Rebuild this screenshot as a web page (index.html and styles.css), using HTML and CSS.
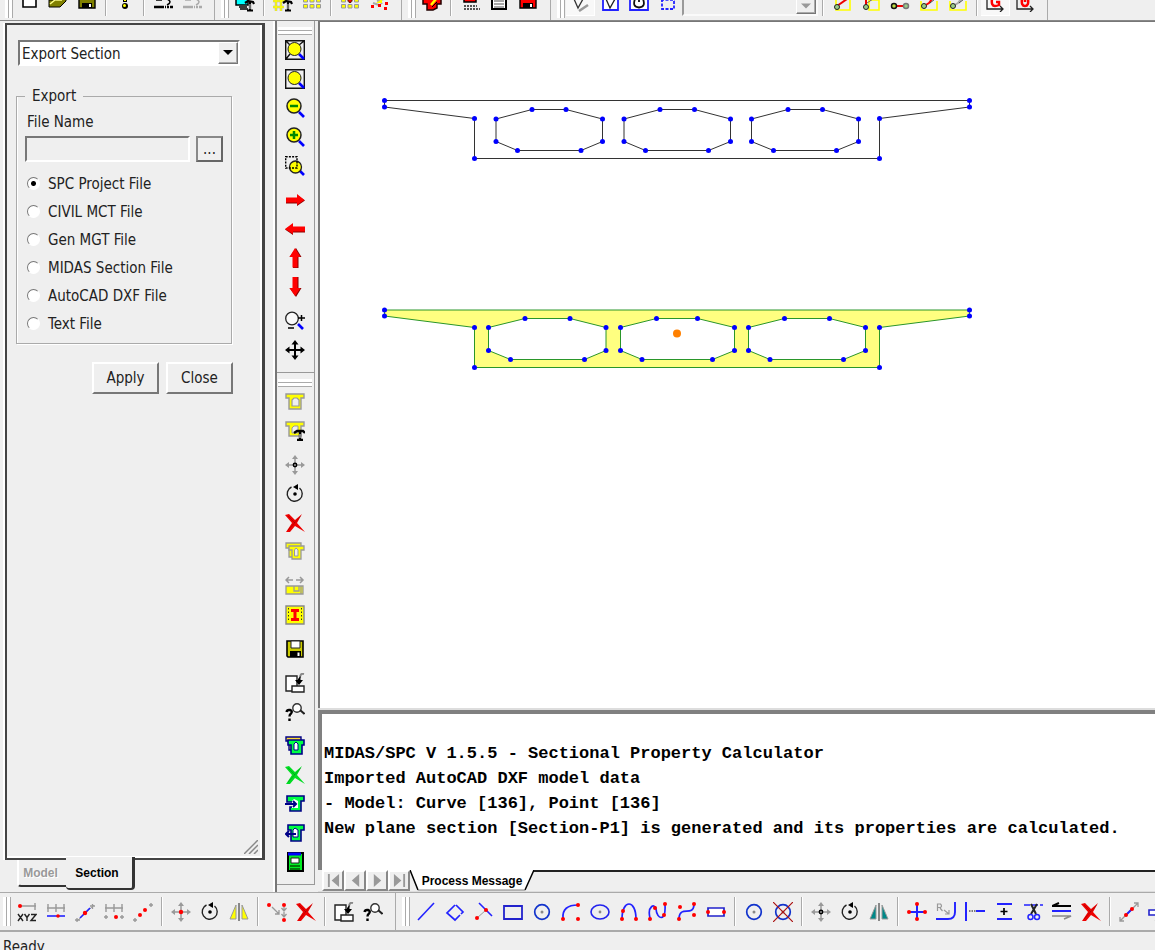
FILE: index.html
```html
<!DOCTYPE html>
<html lang="en">
<head>
<meta charset="utf-8">
<title>MIDAS/SPC - Sectional Property Calculator</title>
<link rel="stylesheet" href="styles.css">
</head>
<body>
<svg class="sprite" aria-hidden="true">
  <defs>
    <marker id="node" markerUnits="userSpaceOnUse" markerWidth="6" markerHeight="6" refX="3" refY="3"><circle cx="3" cy="3" r="2.5" fill="#00f"/></marker>
  </defs>
  <!-- main bar icons, 20 x 12 -->
  <symbol id="new" viewBox="0 0 20 12"><path d="M4-1V7H17V-1" fill="#fff" stroke="#000" stroke-width="1.6"/></symbol>
  <symbol id="open" viewBox="0 0 20 12"><path d="M1 7V0H7L18-2V1L12 7Z" fill="#808000" stroke="#000"/><path d="M2 4L7 0H14" fill="none" stroke="#ff8" stroke-width="1.500"/></symbol>
  <symbol id="save-cut" viewBox="0 0 20 12"><path d="M2-1V8H18V-1Z" fill="#808000" stroke="#000" stroke-width="1.4"/><path d="M5 3H15V8H5Z"/><path d="M12 4H14V7H12Z" fill="#fff"/></symbol>
  <symbol id="bang" viewBox="0 0 20 12"><path d="M10-2V2" stroke="#000" stroke-width="4"/><path d="M10-2V1" stroke="#ff0" stroke-width="2"/><circle cx="10" cy="6" r="3"/><circle cx="9.500" cy="5.500" r="1.500" fill="#ff0"/></symbol>
  <symbol id="undo" viewBox="0 0 20 12"><path d="M3 0H9M14-1Q20 2 14 5" fill="none" stroke="currentColor" stroke-width="1.500"/><path d="M1 7H11M12 7H20" stroke="currentColor" stroke-width="2.500"/><path d="M13.500 5V9M16.500 5V9" stroke="#efefef"/></symbol>
  <symbol id="monitor" viewBox="0 0 20 12"><path d="M1-1V5H13V-1Z" fill="#0ff" stroke="#000" stroke-width="1.500"/><path d="M4 7H12M5 9H13" stroke="#000" stroke-width="1.500"/><path d="M10 3L13 1L18 2L19 4M15 2V10M12 10.500H18" fill="none" stroke="#000" stroke-width="2.200"/><path d="M15 4V9" stroke="#ddd"/></symbol>
  <symbol id="hash" viewBox="0 0 20 12"><path d="M3-1V11M8-1V11M0 1H14M0 7H11" fill="none" stroke="#aaa" stroke-width="2.500"/><path d="M3-1V11M8-1V11M0 1H14M0 7H11" fill="none" stroke="#ff0" stroke-width="1.500"/><path d="M10 3L13 1L18 2L19 4M15 2V10M12 10.500H18" fill="none" stroke="#000" stroke-width="2.200"/><path d="M15 4V9" stroke="#ddd"/></symbol>
  <symbol id="grid" viewBox="0 0 20 12"><g fill="#ff0" stroke="#999"><path d="M1.500-1H5.500V2H1.500ZM8-1H12V2H8ZM14.500-1H18.500V2H14.500ZM1.500 4.500H5.500V8H1.500ZM8 4.500H12V8H8ZM14.500 4.500H18.500V8H14.500Z"/></g></symbol>
  <symbol id="grid-red" viewBox="0 0 20 12"><use href="#grid" width="20" height="12"/><path d="M7-1H13L10 3Z" fill="#f00" stroke="#600"/></symbol>
  <symbol id="scatter" viewBox="0 0 20 12"><path d="M4 3L10 5M9-2L13 4M8 1L15-1" stroke="#aaa" stroke-width="2"/><path d="M7 3L13-1V3Z" fill="#ff0"/><path d="M2 5H5V8H2ZM9 4H12V7H9ZM16 2H19V5H16ZM15 7H18V10H15Z" fill="#f00"/></symbol>
  <symbol id="run" viewBox="0 0 20 12"><path d="M1-1H19V4H15V8L11 10H5V4H1Z" fill="#f00" stroke="#200" stroke-width="1.500"/><path d="M9 5L14-1" stroke="#ff0" stroke-width="2.500"/><path d="M10 7L15 2" stroke="#000"/></symbol>
  <symbol id="list-red" viewBox="0 0 20 12"><path d="M4-1H16V2H4Z" fill="#f00" stroke="#000" stroke-width="1.500"/><path d="M4 6H17M4 9H20" stroke="#222" stroke-width="1.500" stroke-dasharray="2 1"/></symbol>
  <symbol id="sheet" viewBox="0 0 20 12"><path d="M3-1V9H17V-1Z" fill="#fff" stroke="#000" stroke-width="2"/><path d="M5 1H15M5 4H15M5 7H15" stroke="#555" stroke-width="1.200"/><path d="M5-1H15" stroke="#ff0" stroke-width="2"/></symbol>
  <symbol id="disk-red" viewBox="0 0 20 12"><path d="M2-1V8H18V-1Z" fill="#f00" stroke="#000" stroke-width="1.400"/><path d="M5 3H15V8H5Z"/><path d="M12 4H14V7H12Z" fill="#fff"/><path d="M5-1H15V0H5Z" fill="#ff0"/></symbol>
  <symbol id="vee" viewBox="0 0 20 12"><path d="M4-1L8 8L13-1" fill="none" stroke="#333" stroke-width="1.300"/><path d="M9 11L18 5" stroke="#999" stroke-width="2.500"/></symbol>
  <symbol id="vee-box" viewBox="0 0 20 12"><path d="M3-1V10H18V-1" fill="#fff" stroke="#22f" stroke-width="1.800"/><path d="M6-1L10 8L15-1" fill="none" stroke="#222" stroke-width="1.300"/></symbol>
  <symbol id="hand-box" viewBox="0 0 20 12"><path d="M1-1V10H19V-1" fill="#fff" stroke="#22f" stroke-width="1.800"/><path d="M6-1Q3 7 10 7.500Q17 7 14-1M10-1V2" fill="none" stroke="#111" stroke-width="1.800"/></symbol>
  <symbol id="select-box" viewBox="0 0 20 12"><path d="M4-1V9H16V-1" fill="none" stroke="#22f" stroke-width="1.800" stroke-dasharray="3 1.500"/><path d="M3 0H17" stroke="#22f" stroke-width="1.500" stroke-dasharray="3 1.500"/></symbol>
  <symbol id="snap-a" viewBox="0 0 20 12"><path d="M4-1V10H18V-1" fill="none" stroke="#ff0" stroke-width="1.600"/><path d="M5 6L15-1" stroke="#e00" stroke-width="2"/><circle cx="5" cy="7" r="2.500" fill="#9c8" stroke="#222"/></symbol>
  <symbol id="snap-b" viewBox="0 0 20 12"><path d="M8 10H18V0H8Z" fill="none" stroke="#ff0" stroke-width="1.600"/><path d="M5 6V-1" stroke="#e00" stroke-width="2"/><circle cx="5" cy="7" r="2.500" fill="#9c8" stroke="#222"/><path d="M6 3L12-1" stroke="#666"/></symbol>
  <symbol id="snap-c" viewBox="0 0 20 12"><path d="M4 6H16" stroke="#e00" stroke-width="2"/><circle cx="4" cy="6" r="2.500" fill="#bd4" stroke="#111" stroke-width="1.500"/><circle cx="16" cy="6" r="2.500" fill="#9c8" stroke="#777" stroke-width="1.500"/></symbol>
  <symbol id="snap-d" viewBox="0 0 20 12"><path d="M2 1V10H18V1" fill="none" stroke="#ff0" stroke-width="1.600"/><path d="M5 6L10 3L13-1" fill="none" stroke="currentColor" stroke-width="2"/><path d="M11 3L16-1" stroke="#444"/><circle cx="5" cy="6" r="2.500" fill="#9c8" stroke="#222"/></symbol>
  <symbol id="axis-g" viewBox="0 0 20 12"><path d="M2-1V9H18M15 6L18 9L15 12" fill="none" stroke="#222" stroke-width="1.300"/><path d="M7-1Q6 6 10 6Q12 6 14 5V2H11" fill="none" stroke="#f00" stroke-width="2.500"/></symbol>
  <symbol id="axis-u" viewBox="0 0 20 12"><path d="M2-1V9H18M15 6L18 9L15 12" fill="none" stroke="#222" stroke-width="1.300"/><path d="M7-1Q6 6 10 6Q14 6 13-1M10-1V2" fill="none" stroke="#f00" stroke-width="2.500"/></symbol>
  <!-- view bar icons, 20 x 20 -->
  <symbol id="lens" viewBox="0 0 20 20"><path d="M14 14L19 19" stroke="#00f" stroke-width="2.600"/><circle cx="9" cy="8" r="7" fill="#ff0" stroke="#222" stroke-width="1.500"/></symbol>
  <symbol id="fit" viewBox="0 0 20 20"><path d="M.7.7H19.300V19.300H.7ZM1 1L5 5M19 1L14 5M1 19L5 14" fill="none" stroke="#111" stroke-width="1.400"/><path d="M14 14L19 19" stroke="#00f" stroke-width="2.600"/><circle cx="9.500" cy="9" r="6.500" fill="#ff0" stroke="#222"/></symbol>
  <symbol id="window" viewBox="0 0 20 20"><path d="M.7.7H19.300V19.300H.7Z" fill="none" stroke="#111" stroke-width="1.400"/><path d="M14 14L19 19" stroke="#00f" stroke-width="2.600"/><circle cx="9.500" cy="9" r="6.500" fill="#ff0" stroke="#222"/></symbol>
  <symbol id="zoom-out" viewBox="0 0 20 20"><use href="#lens" width="20" height="20"/><path d="M5 8H13" stroke="#080" stroke-width="2.500"/></symbol>
  <symbol id="zoom-in" viewBox="0 0 20 20"><use href="#lens" width="20" height="20"/><path d="M5 8H13M9 4V12" stroke="#080" stroke-width="2.500"/></symbol>
  <symbol id="zoom-area" viewBox="0 0 20 20"><path d="M14 14L19 19" stroke="#00f" stroke-width="2.600"/><circle cx="10.500" cy="11" r="6" fill="#ff0" stroke="#222" stroke-width="1.300"/><path d="M.7.7H12V12H.7Z" fill="none" stroke="#000" stroke-width="1.400" stroke-dasharray="2 1.200"/></symbol>
  <symbol id="right" viewBox="0 0 20 20"><path d="M1 8.500H12V5L20 10.500L12 16V13.500H1Z" fill="#800"/><path d="M1 7.500H12V4L19.500 10L12 15V12.500H1Z" fill="#f00"/></symbol>
  <symbol id="left" viewBox="0 0 20 20"><path d="M20 8.500H8V5L0 10.500L8 16V13.500H20Z" fill="#800"/><path d="M20 7.500H8V4L0 10L8 15V12.500H20Z" fill="#f00"/></symbol>
  <symbol id="up" viewBox="0 0 20 20"><path d="M8 20V9H4.500L11 0L16.500 9H13.500V20Z" fill="#800"/><path d="M7.500 19.500V9H4.500L10 0L15.500 9H12.500V19.500Z" fill="#f00"/></symbol>
  <symbol id="down" viewBox="0 0 20 20"><path d="M8 0V11H4.500L11 20L16.500 11H13.500V0Z" fill="#800"/><path d="M7.500 0V11H4.500L10 19L15.500 11H12.500V0Z" fill="#f00"/></symbol>
  <symbol id="zoom-live" viewBox="0 0 20 20"><path d="M13 13L18 18" stroke="#00f" stroke-width="2.600"/><circle cx="7" cy="7.500" r="6.300" fill="#fafafa" stroke="#222" stroke-width="1.300"/><path d="M13 7H20M16.500 4V10M3 17H9" stroke="#000" stroke-width="1.500"/></symbol>
  <symbol id="pan" viewBox="0 0 20 20"><path d="M10 2V18M2 10H18" stroke="#000" stroke-width="2"/><path d="M10 0L13.500 4.500H6.500ZM10 20L13.500 15.500H6.500ZM0 10L4.500 6.500V13.500ZM20 10L15.500 6.500V13.500Z"/></symbol>
  <symbol id="section" viewBox="0 0 20 20"><path d="M1 2H19V6H16V17H4V6H1Z" fill="#ff0" stroke="#999" stroke-width="1.400"/><path d="M7 14V8L9 6H12L14 8V14Z" fill="#efefef" stroke="#999" stroke-width="1.200"/></symbol>
  <symbol id="section-tool" viewBox="0 0 20 20"><path d="M1 1H19V5H16V15H4V5H1Z" fill="#ff0" stroke="#999" stroke-width="1.400"/><path d="M7 12V7L9 5H13V12Z" fill="#efefef" stroke="#999"/><path d="M9 12L12 10L18 10L20 12M15 11V18M12 19H18" fill="none" stroke="#000" stroke-width="2.400"/><path d="M15 13V17" stroke="#fff"/></symbol>
  <symbol id="move" viewBox="0 0 20 20"><path d="M10 2V18M2 10H18" stroke="#999" stroke-width="1.500"/><path d="M10 0L13 4H7ZM10 20L13 16H7ZM0 10L4 7V13ZM20 10L16 7V13Z" fill="#999"/><circle cx="10" cy="10" r="2.400" fill="currentColor"/><circle cx="10" cy="10" r=".8" fill="#fff"/></symbol>
  <symbol id="move-red" viewBox="0 0 20 20"><path d="M10 2V18M2 10H18" stroke="#999" stroke-width="1.500"/><path d="M10 0L13 4H7ZM10 20L13 16H7ZM0 10L4 7V13ZM20 10L16 7V13Z" fill="#999"/><circle cx="10" cy="10" r="2.200" fill="#f00"/></symbol>
  <symbol id="rotate" viewBox="0 0 20 20"><path d="M6.500 3A7.500 7.500 0 1 0 14.500 4" fill="none" stroke="#222" stroke-width="1.400"/><path d="M8 3L13 0V6Z"/><circle cx="10" cy="10" r="1.800"/></symbol>
  <symbol id="cross" viewBox="0 0 20 20"><path d="M0 2L4 1L10 7L17 1L12 10L20 19L10 13L5 19H1L7 10Z" fill="currentColor"/><path d="M3 3L10 10M3 17L16 3" stroke="#0003"/></symbol>
  <symbol id="section-copy" viewBox="0 0 20 20"><path d="M1 1H16V5H14V15H4V6H1Z" fill="#ff0" stroke="#999" stroke-width="1.300"/><path d="M4 4H19V8H16V17H7V8H4Z" fill="#ff0" stroke="#999" stroke-width="1.300"/><path d="M9.500 14V8L11 6L13 8V14Z" fill="#efefef" stroke="#999"/></symbol>
  <symbol id="stretch" viewBox="0 0 20 20"><path d="M1 4H8M11 4H18M4 1L1 4L4 7M15 1L18 4L15 7" fill="none" stroke="#999" stroke-width="1.500"/><path d="M1 10H18V18H1Z" fill="#ff0" stroke="#999" stroke-width="1.300"/><path d="M9 10V15H14V10M16 10V18" fill="none" stroke="#999" stroke-width="1.300"/></symbol>
  <symbol id="i-beam" viewBox="0 0 20 20"><path d="M1 1H19V19H1Z" fill="#ff0" stroke="#888" stroke-width="1.400"/><path d="M6 5.500H14M6 14.500H14M10 6V14" stroke="#f00" stroke-width="3"/><path d="M3.500 3V17M16.500 3V17" stroke="#333" stroke-dasharray="1.500 2"/></symbol>
  <symbol id="floppy" viewBox="0 0 20 20"><path d="M2 2H18V18H3L2 17Z" fill="#cc0" stroke="#000" stroke-width="1.600"/><path d="M6 2H15V9H6Z" fill="#fff" stroke="#222"/><path d="M5 12H16V18H5Z"/><path d="M12.500 13.500H14.500V17H12.500Z" fill="#fff"/></symbol>
  <symbol id="import" viewBox="0 0 20 20"><path d="M1 3H12V18H1Z" fill="#fff" stroke="#222" stroke-width="1.400"/><path d="M7 13H19V19H7Z" fill="#fff" stroke="#222" stroke-width="1.400"/><path d="M19 1Q15 0 15 5" fill="none" stroke="#888" stroke-width="2"/><path d="M10 7H18L14 12ZM15.500 3V9H13V6Z"/></symbol>
  <symbol id="query" viewBox="0 0 20 20"><circle cx="12" cy="6" r="4.200" fill="#fff" stroke="#333" stroke-width="1.400"/><path d="M15 8L19.500 12" stroke="#222" stroke-width="2"/><path d="M1.500 10Q2 7.500 5 8Q8 9 6 11.500Q4.500 12.500 4.500 14.500M4.500 16.500V19" fill="none" stroke="#000" stroke-width="2.400"/></symbol>
  <symbol id="green-stack" viewBox="0 0 20 20"><path d="M1 1H16V5H14V14H4V5H1Z" fill="#fd3" stroke="#008" stroke-width="1.400"/><path d="M3 4H19V9H17V18H6V9H3Z" fill="#0f4" stroke="#008" stroke-width="1.600"/><path d="M9 14V8L11 6L13 8V14Z" fill="#fff" stroke="#008"/></symbol>
  <symbol id="green-in" viewBox="0 0 20 20"><path d="M2 2H19V7H16V17H5V13H12V8H2Z" fill="#0f4" stroke="#008" stroke-width="1.600"/><path d="M7 14V7L9 5L13 7V14Z" fill="#fff"/><path d="M0 10H11M8 7L11 10L8 13" fill="none" stroke="#008" stroke-width="2"/></symbol>
  <symbol id="green-out" viewBox="0 0 20 20"><path d="M3 2H19V7H16V18H6V7H3Z" fill="#0f4" stroke="#008" stroke-width="1.600"/><path d="M8 14V7L10 5L13 7V14Z" fill="#fff" stroke="#008"/><path d="M1 11H11M4 8L1 11L4 14" fill="none" stroke="#008" stroke-width="2"/></symbol>
  <symbol id="report" viewBox="0 0 20 20"><path d="M3 1H18V19H3Z" fill="#0e2" stroke="#000" stroke-width="2"/><path d="M3 2H16" stroke="#00f" stroke-width="3"/><path d="M6 6H14V11H6Z" fill="#fff" stroke="#222"/><path d="M5 14H15M5 17H15" stroke="#050" stroke-width="1.400"/></symbol>
  <!-- drawing bar icons, 20 x 20 -->
  <symbol id="xyz" viewBox="0 0 20 20"><path d="M3 4H19M18 1V8" stroke="#999" stroke-width="1.400"/><circle cx="3" cy="4" r="2" fill="#f00"/><path d="M1 12L6 19M6 12L1 19M7.500 12L10 15.500L12.500 12M10 15V19M14 12.500H19L14 18.500H19" fill="none" stroke="#222" stroke-width="1.400"/></symbol>
  <symbol id="divide" viewBox="0 0 20 20"><path d="M1 6H19M2 2V10M10 2V10M18 2V10" stroke="#999" stroke-width="1.400"/><path d="M1 14H19" stroke="#22f" stroke-width="1.600"/><circle cx="12" cy="14" r="1.800" fill="#f00"/></symbol>
  <symbol id="mid" viewBox="0 0 20 20"><path d="M2 19L19 3" stroke="#999"/><path d="M5 16L15 6" stroke="#22f" stroke-width="1.600"/><path d="M0 18H5M2 16V20M15 4H20M17.500 2V7" stroke="#999" stroke-width="1.300"/><circle cx="10" cy="11" r="2.200" fill="#f00"/></symbol>
  <symbol id="offset-pt" viewBox="0 0 20 20"><path d="M1 6H19M2 2V10M10 2V10M18 2V10M0 15H4M2 13V17M16 15H20M18 13V17" stroke="#999" stroke-width="1.400"/><circle cx="12" cy="15" r="2" fill="#f00"/></symbol>
  <symbol id="points" viewBox="0 0 20 20"><path d="M0 18H4M2 16V20M16 3H20M18 1V5" stroke="#999" stroke-width="1.400"/><g fill="#f00"><circle cx="7" cy="13" r="2"/><circle cx="12" cy="8" r="2"/></g></symbol>
  <symbol id="mirror" viewBox="0 0 20 20"><path d="M10 1V19" stroke="#888" stroke-width="2"/><path d="M7 3V17H1ZM13 3V17H19Z" fill="currentColor" stroke="#999"/></symbol>
  <symbol id="merge" viewBox="0 0 20 20"><path d="M5 5L12 12M12 8V12H8M17 5V15M14.500 6L17 9L19.500 6M14.500 12L17 15L19.500 12" fill="none" stroke="#999" stroke-width="1.300"/><g fill="#f00"><circle cx="2" cy="3" r="2"/><circle cx="17" cy="3" r="2"/><circle cx="17" cy="18" r="2"/></g></symbol>
  <symbol id="line" viewBox="0 0 20 20"><path d="M2 18L18 1" stroke="#22f" stroke-width="1.600"/></symbol>
  <symbol id="polyline" viewBox="0 0 20 20"><path d="M11 3L18 10L16 12M10 3L2 11L10 18L15 13" fill="none" stroke="#22f" stroke-width="1.700"/></symbol>
  <symbol id="perp" viewBox="0 0 20 20"><path d="M3 16L12 8" stroke="#999"/><path d="M5 1L18 14" stroke="#22f" stroke-width="1.600"/><g fill="#f00"><circle cx="12" cy="8" r="2"/><circle cx="3" cy="16" r="2"/></g></symbol>
  <symbol id="rect" viewBox="0 0 20 20"><path d="M1 4H19V17H1Z" fill="none" stroke="#22c" stroke-width="1.800"/></symbol>
  <symbol id="circle" viewBox="0 0 20 20"><circle cx="10" cy="10" r="7.300" fill="none" stroke="#13c" stroke-width="1.700"/><circle cx="10" cy="10" r="1.500" fill="#888"/></symbol>
  <symbol id="arc" viewBox="0 0 20 20"><path d="M2 16Q1 3 17 3" fill="none" stroke="#22f" stroke-width="1.700"/><g fill="#f00"><circle cx="2" cy="17" r="2"/><circle cx="17" cy="3" r="2"/><circle cx="17" cy="17" r="2"/></g></symbol>
  <symbol id="ellipse" viewBox="0 0 20 20"><ellipse cx="10" cy="10" rx="9" ry="7" fill="none" stroke="#22e" stroke-width="1.600"/><circle cx="10" cy="10" r="1.400" fill="#888"/></symbol>
  <symbol id="arch" viewBox="0 0 20 20"><path d="M3 17C3-3 17-3 17 17" fill="none" stroke="#22f" stroke-width="1.700"/><g fill="#f00"><circle cx="3" cy="17" r="2"/><circle cx="4" cy="9" r="2"/><circle cx="17" cy="17" r="2"/></g></symbol>
  <symbol id="spline" viewBox="0 0 20 20"><path d="M2 16C-1 4 7 1 8 7C9 18 18 20 17 3" fill="none" stroke="#22f" stroke-width="1.700"/><g fill="#f00"><circle cx="2" cy="17" r="2"/><circle cx="7" cy="6" r="2"/><circle cx="17" cy="2" r="2"/><circle cx="16" cy="13" r="2"/></g></symbol>
  <symbol id="curve" viewBox="0 0 20 20"><path d="M2 16C3 3 16 15 17 3" fill="none" stroke="#22f" stroke-width="1.700"/><g fill="#f00"><circle cx="2" cy="17" r="2"/><circle cx="3" cy="5" r="2"/><circle cx="17" cy="2" r="2"/><circle cx="17" cy="13" r="2"/></g></symbol>
  <symbol id="slot" viewBox="0 0 20 20"><path d="M2 6H18V14H2Z" fill="#fff" stroke="#22c" stroke-width="1.700"/><g fill="#f00"><circle cx="2" cy="10" r="2"/><circle cx="18" cy="10" r="2"/></g></symbol>
  <symbol id="circle-x" viewBox="0 0 20 20"><use href="#circle" width="20" height="20"/><path d="M0 0L20 20M20 0L0 20" stroke="#a11" stroke-width="1.200"/></symbol>
  <symbol id="extend" viewBox="0 0 20 20"><path d="M2 10H18M10 3V16" stroke="#22f" stroke-width="2"/><g fill="#f00"><circle cx="2" cy="10" r="2"/><circle cx="18" cy="10" r="2"/><circle cx="10" cy="2" r="2"/><circle cx="10" cy="17" r="2"/></g></symbol>
  <symbol id="fillet" viewBox="0 0 20 20"><path d="M0 17H12Q19 17 19 10V0" fill="none" stroke="#22f" stroke-width="1.900"/><path d="M1.500 9V2H4.500Q6.500 4 4.500 5.500H2M4 6L6.500 9M8 8L13 12M13 8V12H9" fill="none" stroke="#999" stroke-width="1.200"/></symbol>
  <symbol id="trim-to" viewBox="0 0 20 20"><path d="M1 0V19M11 9H20" stroke="#22f" stroke-width="2"/><path d="M4 9H11" stroke="#555" stroke-width="1.500" stroke-dasharray="1.500 1"/></symbol>
  <symbol id="offset" viewBox="0 0 20 20"><path d="M3 2H18M3 17H18" stroke="#22f" stroke-width="2"/><path d="M10 6V13M6.500 9.500H13.500" stroke="#000" stroke-width="1.700"/></symbol>
  <symbol id="cut" viewBox="0 0 20 20"><path d="M1 3H20" stroke="#22f" stroke-width="1.600" stroke-dasharray="6 2"/><path d="M8 2L13 12M14 2L8 12" stroke="#222" stroke-width="2"/><g fill="none" stroke="#22f" stroke-width="1.500"><circle cx="7.500" cy="15" r="2.500"/><circle cx="14" cy="15" r="2.500"/></g></symbol>
  <symbol id="parallel" viewBox="0 0 20 20"><path d="M0 4H19M0 4L7 1" stroke="#000" stroke-width="2"/><path d="M0 9H19" stroke="#22f" stroke-width="2"/><path d="M0 14H19L12 17" fill="none" stroke="#888" stroke-width="1.600"/></symbol>
  <symbol id="scale" viewBox="0 0 20 20"><path d="M1 19L19 1M1 15V19H5M15 1H19V5" fill="none" stroke="#999" stroke-width="1.300"/><path d="M7 13L13 7" stroke="#22f" stroke-width="2"/><g fill="#f00"><circle cx="7" cy="13" r="2"/><circle cx="13" cy="7" r="2"/></g></symbol>
  <symbol id="widen" viewBox="0 0 20 20"><path d="M1 8H19V13H1Z" fill="#fff" stroke="#22c" stroke-width="1.600"/><path d="M10 1V6M10 15V20M7 3L10 1L13 3M7 18L10 20L13 18" fill="none" stroke="#999" stroke-width="1.300"/></symbol>
</svg>

<div class="app">
  <header class="bar bar-main">
    <div class="band">
      <button class="tool" aria-label="New"><svg><use href="#new"/></svg></button>
      <button class="tool" aria-label="Open"><svg><use href="#open"/></svg></button>
      <button class="tool" aria-label="Save"><svg><use href="#save-cut"/></svg></button>
      <span class="sep"></span>
      <button class="tool" aria-label="Message"><svg><use href="#bang"/></svg></button>
      <span class="sep"></span>
      <button class="tool" aria-label="Undo"><svg><use href="#undo"/></svg></button>
      <button class="tool dim" aria-label="Redo"><svg><use href="#undo"/></svg></button>
    </div>
    <div class="band">
      <button class="tool" aria-label="Display"><svg><use href="#monitor"/></svg></button>
      <span class="sep"></span>
      <button class="tool" aria-label="Grid settings"><svg><use href="#hash"/></svg></button>
      <button class="tool" aria-label="Grid"><svg><use href="#grid"/></svg></button>
      <span class="sep"></span>
      <button class="tool" aria-label="Grid snap"><svg><use href="#grid-red"/></svg></button>
      <button class="tool" aria-label="Point snap"><svg><use href="#scatter"/></svg></button>
    </div>
    <div class="band">
      <button class="tool" aria-label="Calculate"><svg><use href="#run"/></svg></button>
      <span class="sep"></span>
      <button class="tool" aria-label="Property list"><svg><use href="#list-red"/></svg></button>
      <button class="tool" aria-label="Report"><svg><use href="#sheet"/></svg></button>
      <button class="tool" aria-label="Save results"><svg><use href="#disk-red"/></svg></button>
    </div>
    <div class="band">
      <button class="tool pressed" aria-label="Select"><svg><use href="#vee"/></svg></button>
      <button class="tool" aria-label="Select all"><svg><use href="#vee-box"/></svg></button>
      <button class="tool" aria-label="Select previous"><svg><use href="#hand-box"/></svg></button>
      <button class="tool" aria-label="Select window"><svg><use href="#select-box"/></svg></button>
      <span class="combo combo-off">
        <select aria-label="Group" disabled><option></option></select>
        <svg class="arrow" viewBox="0 0 10 6"><path d="M0 0H10L5 5Z"/></svg>
      </span>
      <span class="sep"></span>
      <button class="tool" aria-label="Snap end"><svg><use href="#snap-a"/></svg></button>
      <button class="tool" aria-label="Snap middle"><svg><use href="#snap-b"/></svg></button>
      <button class="tool" aria-label="Snap node"><svg><use href="#snap-c"/></svg></button>
      <button class="tool red" aria-label="Snap on"><svg><use href="#snap-d"/></svg></button>
      <button class="tool dim" aria-label="Snap off"><svg><use href="#snap-d"/></svg></button>
      <span class="sep"></span>
      <button class="tool pressed" aria-label="Global axis"><svg><use href="#axis-g"/></svg></button>
      <button class="tool" aria-label="User axis"><svg><use href="#axis-u"/></svg></button>
    </div>
  </header>

  <div class="work">
    <aside class="side">
      <form class="panel" onsubmit="return false">
        <span class="combo">
          <select aria-label="Command"><option>Export Section</option></select>
          <svg class="arrow" viewBox="0 0 10 6"><path d="M0 0H10L5 5Z"/></svg>
        </span>
        <fieldset class="group">
          <legend>Export</legend>
          <label class="file-label" for="file">File Name</label>
          <div class="file-row">
            <input id="file" class="file" type="text" disabled>
            <button class="btn browse" type="button">...</button>
          </div>
          <label class="choice"><input type="radio" name="fmt" checked>SPC Project File</label>
          <label class="choice"><input type="radio" name="fmt">CIVIL MCT File</label>
          <label class="choice"><input type="radio" name="fmt">Gen MGT File</label>
          <label class="choice"><input type="radio" name="fmt">MIDAS Section File</label>
          <label class="choice"><input type="radio" name="fmt">AutoCAD DXF File</label>
          <label class="choice"><input type="radio" name="fmt">Text File</label>
        </fieldset>
        <div class="actions">
          <button class="btn" type="button">Apply</button>
          <button class="btn" type="button">Close</button>
        </div>
        <svg class="resize" viewBox="0 0 14 14" aria-hidden="true"><path d="M0 14L14 0M5 14L14 5M10 14L14 10" stroke="#888" stroke-width="1.500"/></svg>
      </form>
      <div class="tabs">
        <button class="tab tab-off">Model</button>
        <button class="tab tab-on">Section</button>
      </div>
    </aside>

    <nav class="rail">
      <div class="stack">
        <button class="tool" aria-label="Zoom fit"><svg><use href="#fit"/></svg></button>
        <button class="tool" aria-label="Zoom window"><svg><use href="#window"/></svg></button>
        <button class="tool" aria-label="Zoom out"><svg><use href="#zoom-out"/></svg></button>
        <button class="tool" aria-label="Zoom in"><svg><use href="#zoom-in"/></svg></button>
        <button class="tool" aria-label="Zoom area"><svg><use href="#zoom-area"/></svg></button>
        <span class="gap"></span>
        <button class="tool" aria-label="Pan right"><svg><use href="#right"/></svg></button>
        <button class="tool" aria-label="Pan left"><svg><use href="#left"/></svg></button>
        <button class="tool" aria-label="Pan up"><svg><use href="#up"/></svg></button>
        <button class="tool" aria-label="Pan down"><svg><use href="#down"/></svg></button>
        <span class="gap"></span>
        <button class="tool" aria-label="Dynamic zoom"><svg><use href="#zoom-live"/></svg></button>
        <button class="tool" aria-label="Dynamic pan"><svg><use href="#pan"/></svg></button>
      </div>
      <div class="stack">
        <button class="tool" aria-label="Section"><svg><use href="#section"/></svg></button>
        <button class="tool" aria-label="Modify section"><svg><use href="#section-tool"/></svg></button>
        <span class="gap"></span>
        <button class="tool" aria-label="Move section"><svg><use href="#move"/></svg></button>
        <button class="tool" aria-label="Rotate section"><svg><use href="#rotate"/></svg></button>
        <button class="tool crimson" aria-label="Delete section"><svg><use href="#cross"/></svg></button>
        <button class="tool" aria-label="Copy section"><svg><use href="#section-copy"/></svg></button>
        <span class="gap"></span>
        <button class="tool" aria-label="Mesh size"><svg><use href="#stretch"/></svg></button>
        <button class="tool" aria-label="Properties"><svg><use href="#i-beam"/></svg></button>
        <span class="gap"></span>
        <button class="tool" aria-label="Save section"><svg><use href="#floppy"/></svg></button>
        <span class="gap"></span>
        <button class="tool" aria-label="Import"><svg><use href="#import"/></svg></button>
        <button class="tool" aria-label="Query"><svg><use href="#query"/></svg></button>
        <span class="gap"></span>
        <button class="tool" aria-label="Combine"><svg><use href="#green-stack"/></svg></button>
        <button class="tool green" aria-label="Delete combined"><svg><use href="#cross"/></svg></button>
        <button class="tool" aria-label="Add part"><svg><use href="#green-in"/></svg></button>
        <button class="tool" aria-label="Remove part"><svg><use href="#green-out"/></svg></button>
        <button class="tool" aria-label="Result"><svg><use href="#report"/></svg></button>
      </div>
    </nav>

    <main class="view">
      <section class="canvas" aria-label="Model view">
        <svg class="drawing">
          <g transform="translate(-320 -22)">
            <g class="curve">
              <path d="M384.500 100.500H969.500V107L879.500 118.500V158.500H474.500V118.500L384.500 107Z"/>
              <path d="M496 119L532 109.500H566L602.500 119V141.500L581 150.500H517.500L496 141.500Z"/>
              <path d="M624 119L660 109.500H694.500L730.500 119V141.500L708.500 150.500H645.500L624 141.500Z"/>
              <path d="M751.500 119L788 109.500H822.500L858.500 119V141.500L836.500 150.500H773.500L751.500 141.500Z"/>
            </g>
            <g class="plane">
              <path d="M384.500 310H969.500V316L879.500 327.500V367.500H474.500V327.500L384.500 316Z"/>
              <path class="hole" d="M488.500 327.500L525 318.500H570L606 327.500V350.500L584.500 359.500H510.500L488.500 350.500Z"/>
              <path class="hole" d="M620.500 327.500L656.500 318.500H697.500L734.500 327.500V350.500L712.500 359.500H642L620.500 350.500Z"/>
              <path class="hole" d="M748.500 327.500L784.500 318.500H829.500L865.500 327.500V350.500L843.500 359.500H770L748.500 350.500Z"/>
            </g>
            <circle cx="677" cy="333.500" r="4" fill="#ff8000"/>
          </g>
        </svg>
      </section>
      <section class="log" aria-label="Messages">
        <div class="log-text">
          <p>MIDAS/SPC V 1.5.5 - Sectional Property Calculator</p>
          <p>Imported AutoCAD DXF model data</p>
          <p>- Model: Curve [136], Point [136]</p>
          <p>New plane section [Section-P1] is generated and its properties are calculated.</p>
        </div>
        <div class="log-tabs">
          <button class="nav" aria-label="First"><svg viewBox="0 0 14 14"><path d="M1 0H3V14H1ZM13 0V14L5 7Z"/></svg></button>
          <button class="nav" aria-label="Previous"><svg viewBox="0 0 14 14"><path d="M11 0V14L3 7Z"/></svg></button>
          <button class="nav" aria-label="Next"><svg viewBox="0 0 14 14"><path d="M3 0V14L11 7Z"/></svg></button>
          <button class="nav" aria-label="Last"><svg viewBox="0 0 14 14"><path d="M1 0V14L9 7ZM11 0H13V14H11Z"/></svg></button>
          <button class="sheet-tab"><svg viewBox="0 0 124 22" preserveAspectRatio="none" aria-hidden="true"><path d="M0 0L8 21H115L124 0" fill="#fff"/><path d="M0 0L8 21M115 21L124 0" stroke="#000" stroke-width="1.500"/><path d="M8 21H115" stroke="#777"/></svg><span>Process Message</span></button>
          <span class="rest"></span>
        </div>
      </section>
    </main>
  </div>

  <div class="bar bar-draw">
    <div class="band">
      <button class="tool" aria-label="Point by coordinates"><svg><use href="#xyz"/></svg></button>
      <button class="tool" aria-label="Divide line"><svg><use href="#divide"/></svg></button>
      <button class="tool" aria-label="Point on line"><svg><use href="#mid"/></svg></button>
      <button class="tool" aria-label="Divide points"><svg><use href="#offset-pt"/></svg></button>
      <button class="tool" aria-label="Points between"><svg><use href="#points"/></svg></button>
      <span class="sep"></span>
      <button class="tool" aria-label="Move point"><svg><use href="#move-red"/></svg></button>
      <button class="tool" aria-label="Rotate point"><svg><use href="#rotate"/></svg></button>
      <button class="tool yellow" aria-label="Mirror point"><svg><use href="#mirror"/></svg></button>
      <span class="sep"></span>
      <button class="tool" aria-label="Merge points"><svg><use href="#merge"/></svg></button>
      <button class="tool crimson" aria-label="Delete point"><svg><use href="#cross"/></svg></button>
      <span class="sep"></span>
      <button class="tool" aria-label="Import points"><svg><use href="#import"/></svg></button>
      <button class="tool" aria-label="Query point"><svg><use href="#query"/></svg></button>
    </div>
    <div class="band">
      <button class="tool" aria-label="Line"><svg><use href="#line"/></svg></button>
      <button class="tool" aria-label="Polyline"><svg><use href="#polyline"/></svg></button>
      <button class="tool" aria-label="Perpendicular"><svg><use href="#perp"/></svg></button>
      <button class="tool" aria-label="Rectangle"><svg><use href="#rect"/></svg></button>
      <button class="tool" aria-label="Circle"><svg><use href="#circle"/></svg></button>
      <button class="tool" aria-label="Arc"><svg><use href="#arc"/></svg></button>
      <button class="tool" aria-label="Ellipse"><svg><use href="#ellipse"/></svg></button>
      <button class="tool" aria-label="Parabola"><svg><use href="#arch"/></svg></button>
      <button class="tool" aria-label="Spline"><svg><use href="#spline"/></svg></button>
      <button class="tool" aria-label="Curve"><svg><use href="#curve"/></svg></button>
      <button class="tool" aria-label="Wide line"><svg><use href="#slot"/></svg></button>
      <span class="sep"></span>
      <button class="tool" aria-label="Closed curve"><svg><use href="#circle"/></svg></button>
      <button class="tool" aria-label="Remove closed curve"><svg><use href="#circle-x"/></svg></button>
      <span class="sep"></span>
      <button class="tool" aria-label="Move curve"><svg><use href="#move"/></svg></button>
      <button class="tool" aria-label="Rotate curve"><svg><use href="#rotate"/></svg></button>
      <button class="tool teal" aria-label="Mirror curve"><svg><use href="#mirror"/></svg></button>
      <span class="sep"></span>
      <button class="tool" aria-label="Intersect"><svg><use href="#extend"/></svg></button>
      <button class="tool" aria-label="Fillet"><svg><use href="#fillet"/></svg></button>
      <button class="tool" aria-label="Extend"><svg><use href="#trim-to"/></svg></button>
      <button class="tool" aria-label="Offset"><svg><use href="#offset"/></svg></button>
      <button class="tool" aria-label="Trim"><svg><use href="#cut"/></svg></button>
      <button class="tool" aria-label="Reverse"><svg><use href="#parallel"/></svg></button>
      <button class="tool crimson" aria-label="Delete curve"><svg><use href="#cross"/></svg></button>
      <span class="sep"></span>
      <button class="tool" aria-label="Line width"><svg><use href="#scale"/></svg></button>
      <button class="tool" aria-label="Widen"><svg><use href="#widen"/></svg></button>
    </div>
  </div>
  <footer class="status">Ready</footer>
</div>
</body>
</html>
```
FILE: styles.css
```css
* { box-sizing: border-box; }

body {
  margin: 0;
  background: #efefef;
  color: #222;
  font: 15px/20px "DejaVu Sans Condensed", "DejaVu Sans", sans-serif;
}

button, input, select { font: inherit; color: inherit; }
p { margin: 0; }

.sprite { position: absolute; width: 0; height: 0; }

.app {
  display: flex;
  flex-direction: column;
  height: 100vh;
  overflow: hidden;
}

/* toolbars */
.bar {
  display: flex;
  flex: none;
  overflow: hidden;
}
.bar-main { height: 21px; padding-left: 2px; border-bottom: 1px solid #888; }
.bar-draw {
  height: 40px;
  border-top: 1px solid #aaa;
  border-bottom: 2px solid #aaa;
}
.band {
  display: flex;
  flex: none;
  padding-right: 8px;
  border-right: 1px solid #aaa;
}
.band::before, .stack::before {
  content: "";
  flex: none;
  width: 8px;
  margin: 0 1px 2px 6px;
  background: linear-gradient(90deg, #fff 3px, #aaa 3px, #aaa 4px, #fff 4px, #fff 7px, #aaa 7px);
}
.band:first-child::before { margin-left: 3px; }
.bar-draw .band::before { margin-top: 4px; margin-bottom: 4px; }
.tool {
  display: flex;
  flex: none;
  align-items: center;
  justify-content: center;
  width: 29px;
  height: 29px;
  padding: 0;
  border: 0;
  background: none;
  color: #000;
}
.tool svg { width: 20px; height: 20px; }
.bar-main .tool { height: 16px; align-items: flex-start; }
.bar-main .tool svg { height: 12px; }
.bar-draw .tool { height: 38px; }
.tool.dim { color: #aaa; }
.tool.red { color: #f00; }
.tool.crimson { color: #e00; }
.tool.green { color: #0d2; }
.tool.yellow { color: #ff0; }
.tool.teal { color: #088; }
.tool.pressed { background: #f8f8f8; border: solid #fff; border-width: 0 1px 1px 0; }
.sep {
  flex: none;
  width: 2px;
  margin: 0 3px 4px 4px;
  border-left: 1px solid #aaa;
  border-right: 1px solid #fff;
}
.bar-draw .sep { margin-top: 4px; }

/* middle part */
.work {
  display: grid;
  grid-template-columns: 275px 43px 1fr;
  flex: 1;
  min-height: 0;
}
.side {
  display: flex;
  flex-direction: column;
  padding: 2px 10px 0 5px;
}
.panel {
  position: relative;
  flex: 1;
  padding: 15px 22px 0 10px;
  border: solid #444;
  border-width: 2px 3px 2px 2px;
  box-shadow: inset -2px -2px #fff, -2px 0 #fff;
}
.combo { position: relative; display: block; margin: 0 0 20px 1px; }
.combo select {
  display: block;
  width: 100%;
  height: 26px;
  padding: 2px 24px 0 2px;
  appearance: none;
  border: 2px solid;
  border-color: #777 #fff #fff #777;
  border-radius: 0;
  background: #fff;
}
.combo .arrow {
  position: absolute;
  top: 2px;
  right: 2px;
  width: 20px;
  height: 22px;
  padding: 6px 4px;
  border: 1px solid;
  border-color: #fff #777 #777 #fff;
  box-shadow: inset -1px -1px #aaa;
  background: #efefef;
  pointer-events: none;
}
.combo-off { width: 136px; height: 16px; margin: 0; overflow: hidden; }
.combo-off select { height: 16px; background: #efefef; border-top: 0; }
.combo-off .arrow { top: 0; height: 14px; padding: 2px 4px; border-top: 0; fill: #999; }

.group {
  min-width: 0;
  margin: 0 8px 0 -1px;
  padding: 0 8px 5px;
  border: 1px solid #aaa;
  box-shadow: inset 1px 0 #fff, 1px 1px #fff;
}
.group legend { padding: 0 7px; }
.file-label { display: block; margin: 6px 0 4px 2px; }
.file-row { display: flex; gap: 6px; margin-bottom: 8px; }
.file {
  flex: 1;
  min-width: 0;
  height: 26px;
  border: 2px solid;
  border-color: #777 #fff #fff #777;
  background: #efefef;
}
.choice { display: flex; align-items: center; gap: 8px; height: 28px; }
.choice input {
  width: 13px;
  height: 13px;
  margin: 0 0 2px 2px;
  appearance: none;
  border: 1px solid;
  border-color: #777 #fff #fff #777;
  border-radius: 50%;
  background: #fff;
}
.choice input:checked { background: radial-gradient(circle, #000 2px, #fff 3px); }
.btn {
  width: 67px;
  height: 32px;
  padding: 0;
  border: 2px solid;
  border-color: #fff #777 #777 #fff;
  background: #efefef;
}
.browse {
  width: 27px;
  height: 26px;
  border-color: #888 #666 #666 #888;
  line-height: 16px;
}
.actions {
  display: flex;
  justify-content: flex-end;
  gap: 7px;
  margin: 18px 7px 0 0;
}
.resize { position: absolute; right: 4px; bottom: 4px; width: 14px; height: 14px; }

.tabs {
  display: flex;
  align-items: flex-start;
  height: 32px;
  padding-left: 12px;
  font: bold 12px/16px "Liberation Sans", Arial, sans-serif;
}
.tab {
  padding: 0 4px 0 0;
  border: solid #333;
  background: #efefef;
}
.tab-off {
  width: 49px;
  height: 27px;
  border-width: 0 0 2px;
  border-left: 2px solid #fff;
  border-radius: 0 0 0 4px;
  color: #999;
  text-shadow: 1px 1px #fff;
}
.tab-on {
  position: relative;
  width: 69px;
  height: 33px;
  margin-top: -3px;
  border-width: 0 3px 2px 0;
  border-radius: 0 0 4px 4px;
  color: #000;
}

/* vertical toolbars */
.rail {
  display: flex;
  flex-direction: column;
  min-height: 0;
  padding-right: 3px;
  border-left: 2px solid #777;
  box-shadow: -2px 0 #fff;
}
.stack {
  display: flex;
  flex-direction: column;
  align-items: center;
  padding: 0 2px 8px 0;
  border: solid #999;
  border-width: 0 1px 1px 0;
}
.stack::before {
  width: 34px;
  height: 8px;
  margin: 6px 0 0;
  background: linear-gradient(#fff 3px, #aaa 3px, #aaa 4px, #fff 4px, #fff 7px, #aaa 7px);
}
.gap { flex: none; height: 5px; }

/* model view */
.view { display: flex; flex-direction: column; min-width: 0; }
.canvas {
  flex: 1;
  min-height: 0;
  background: #fff;
  border: solid #777;
  border-width: 1px 0 0 2px;
}
.drawing { display: block; width: 100%; height: 100%; }
.drawing path { marker-start: url(#node); marker-mid: url(#node); }
.curve path { fill: none; stroke: #333; }
.plane path { fill: #ffff80; stroke: #2a962a; }
.plane .hole { fill: #fff; }

/* message window */
.log {
  display: flex;
  flex-direction: column;
  flex: none;
  height: 184px;
  border-top: 2px solid #ddd;
}
.log-text {
  flex: 1;
  padding: 27px 2px 0;
  overflow: hidden;
  border: solid #808080;
  border-width: 4px 0 0 4px;
  background: #fff;
  color: #000;
  font: bold 17px/25px "Liberation Mono", monospace;
  white-space: nowrap;
}
.log-tabs { display: flex; height: 22px; padding-left: 4px; border-bottom: 1px solid #ddd; }
.nav {
  display: flex;
  align-items: center;
  justify-content: center;
  width: 22px;
  padding: 0;
  border: 2px solid;
  border-color: #fff #888 #888 #fff;
  background: #efefef;
  fill: #999;
}
.nav svg { width: 13px; height: 13px; }
.sheet-tab {
  position: relative;
  width: 124px;
  padding: 0;
  border: 0;
  background: none;
  color: #000;
  font: bold 12px/20px "Liberation Sans", Arial, sans-serif;
}
.sheet-tab svg { position: absolute; inset: 0; width: 100%; height: 100%; fill: none; }
.sheet-tab span { position: relative; }
.rest { flex: 1; border-top: 2px solid #222; }

.status {
  flex: none;
  height: 18px;
  padding: 5px 3px 0;
  overflow: hidden;
  white-space: nowrap;
}
```
